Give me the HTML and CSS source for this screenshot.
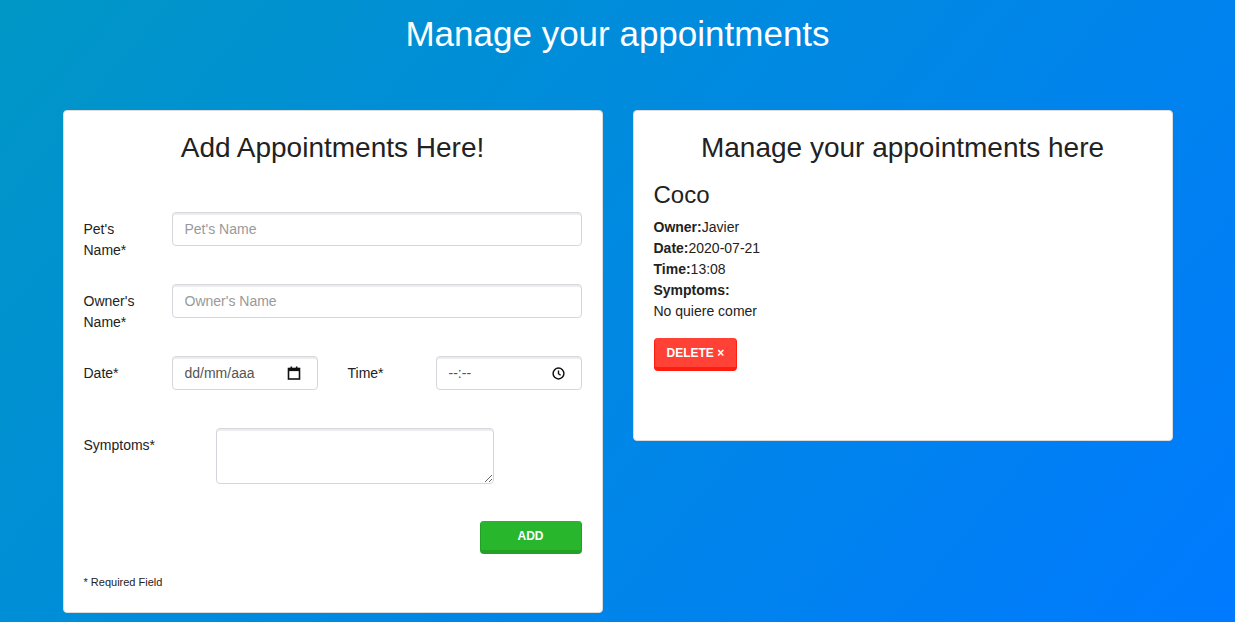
FILE: index.html
```html
<!DOCTYPE html>
<html lang="en">
<head>
<meta charset="utf-8">
<title>Manage your appointments</title>
<link rel="stylesheet" href="styles.css">
</head>
<body>
<h1 class="page-title">Manage your appointments</h1>
<main class="cards">
  <section class="card card-form">
    <h2 class="card-title">Add Appointments Here!</h2>
    <form class="form">
      <div class="form-row">
        <label class="lbl">Pet's Name*</label>
        <input class="ctl ctl-full" type="text" placeholder="Pet's Name">
      </div>
      <div class="form-row">
        <label class="lbl">Owner's Name*</label>
        <input class="ctl ctl-full" type="text" placeholder="Owner's Name">
      </div>
      <div class="form-row">
        <label class="lbl">Date*</label>
        <div class="ctl ctl-half">
          <span class="ctl-value">dd/mm/aaa</span>
          <svg class="ctl-icon" width="14" height="14" viewBox="0 0 14 14" aria-hidden="true">
            <rect x="1.5" y="2.5" width="11" height="10.5" fill="none" stroke="#111" stroke-width="1.6"/>
            <rect x="1.5" y="2.5" width="11" height="2.6" fill="#111"/>
            <rect x="3.5" y="0.5" width="1.6" height="2.5" fill="#111"/>
            <rect x="8.9" y="0.5" width="1.6" height="2.5" fill="#111"/>
          </svg>
        </div>
        <label class="lbl lbl-time">Time*</label>
        <div class="ctl ctl-half">
          <span class="ctl-value">--:--</span>
          <svg class="ctl-icon" width="13" height="13" viewBox="0 0 13 13" aria-hidden="true">
            <circle cx="6.5" cy="6.5" r="5.4" fill="none" stroke="#111" stroke-width="1.5"/>
            <path d="M6.5 3.4V6.7L8.6 8.3" fill="none" stroke="#111" stroke-width="1.4"/>
          </svg>
        </div>
      </div>
      <div class="form-row form-row-tall">
        <label class="lbl lbl-wide">Symptoms*</label>
        <textarea class="ctl ctl-area"></textarea>
      </div>
      <div class="form-actions">
        <button class="btn btn-success" type="button">Add</button>
      </div>
      <p class="req">* Required Field</p>
    </form>
  </section>
  <section class="card card-list">
    <h2 class="card-title">Manage your appointments here</h2>
    <h3 class="pet-name">Coco</h3>
    <div class="details">
      <div><b>Owner:</b>Javier</div>
      <div><b>Date:</b>2020-07-21</div>
      <div><b>Time:</b>13:08</div>
      <div><b>Symptoms:</b></div>
      <div>No quiere comer</div>
    </div>
    <button class="btn btn-danger" type="button">Delete &times;</button>
  </section>
</main>
</body>
</html>
```

FILE: styles.css
```css
html {
  min-height: 100%;
  background: linear-gradient(130deg, #0097c6 0%, #007aff 100%);
}
body {
  margin: 0;
  min-height: 622px;
  font-family: "Liberation Sans", Arial, sans-serif;
  font-size: 14px;
  color: #222;
}
.page-title {
  margin: 0;
  padding-top: 14px;
  font-size: 35px;
  line-height: 39px;
  font-weight: 400;
  color: #fff;
  text-align: center;
}
.cards {
  width: 1110px;
  margin: 57px auto 0;
  display: flex;
  gap: 30px;
  align-items: flex-start;
}
.card {
  width: 540px;
  box-sizing: border-box;
  background: #fff;
  border: 1px solid #dcdcdc;
  border-radius: 4px;
  padding: 21px 20px 22px 20px;
}
.card-list {
  padding-bottom: 69px;
}
.card-title {
  margin: 0;
  font-size: 28px;
  line-height: 32px;
  font-weight: 400;
  text-align: center;
  color: #222;
}
.card-form .card-title {
  margin-bottom: 48px;
}
.card-list .card-title {
  margin-bottom: 17px;
}
.form {
  margin: 0;
}
.form-row {
  display: flex;
  align-items: flex-start;
  min-height: 72px;
}
.form-row-tall {
  min-height: 93px;
}
.lbl {
  width: 88px;
  flex: none;
  box-sizing: border-box;
  padding: 7px 30px 0 0;
  line-height: 21px;
}
.lbl-time {
  margin-left: 30px;
}
.lbl-wide {
  width: 132px;
}
.ctl {
  box-sizing: border-box;
  height: 34px;
  border: 1px solid #d3d6db;
  border-radius: 4px;
  box-shadow: inset 0 2px 0 rgba(0, 0, 0, 0.07);
  background: #fff;
  font-family: "Liberation Sans", Arial, sans-serif;
  font-size: 14px;
  color: #555;
  padding: 6px 12px;
  outline: none;
}
.ctl::placeholder {
  color: #999;
}
.ctl-full {
  flex: 1;
  min-width: 0;
}
.ctl-half {
  width: 146px;
  flex: none;
  display: flex;
  align-items: center;
  justify-content: space-between;
  padding: 0 16px 0 12px;
}
.ctl-value {
  white-space: nowrap;
  color: #555;
}
.ctl-icon {
  flex: none;
  display: block;
}
.ctl-area {
  width: 278px;
  height: 56px;
  resize: vertical;
}
.form-actions {
  display: flex;
  justify-content: flex-end;
  margin-bottom: 21px;
}
.btn {
  box-sizing: border-box;
  height: 33px;
  padding: 0 12px;
  border-style: solid;
  border-width: 0 1px 4px 1px;
  border-radius: 4px;
  font-family: "Liberation Sans", Arial, sans-serif;
  font-size: 12px;
  font-weight: 700;
  text-transform: uppercase;
  white-space: nowrap;
  color: #fff;
  cursor: pointer;
}
.btn-success {
  width: 102px;
  background: #28b62c;
  border-color: #23a127;
}
.btn-danger {
  min-width: 83px;
  background: #ff4136;
  border-color: #ff1d0f;
}
.req {
  margin: 0;
  font-size: 11px;
  line-height: 15px;
  color: #222;
}
.pet-name {
  margin: 0 0 9px;
  font-size: 24px;
  line-height: 27px;
  font-weight: 400;
  color: #222;
}
.details {
  line-height: 21px;
  margin-bottom: 16px;
}
.details b {
  font-weight: 700;
}
```
